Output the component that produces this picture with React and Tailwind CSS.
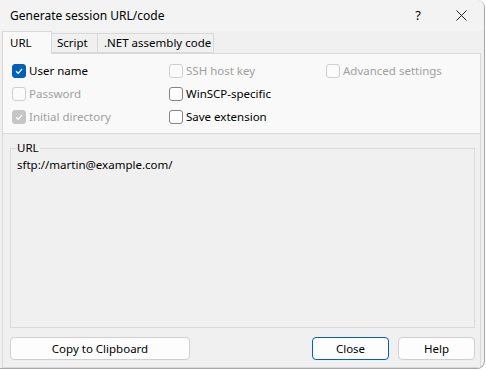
import React from "react";

const font = { fontFamily: '"Segoe UI", "Noto Sans", "Open Sans", sans-serif' };

function Check({ checked, disabled, label }) {
  let box = "border-[#858585] bg-white";
  if (checked && !disabled) box = "border-[#005fb8] bg-[#005fb8]";
  else if (checked && disabled) box = "border-[#c5c5c5] bg-[#c5c5c5]";
  else if (disabled) box = "border-[#cfcfcf] bg-[#fbfbfb]";
  return (
    <div className="flex items-center gap-[3px] h-[23px]">
      <span className={`w-[14px] h-[14px] rounded-[3px] border flex items-center justify-center ${box}`}>
        {checked && (
          <svg width="10" height="10" viewBox="0 0 10 10">
            <path d="M2 5.2 L4.2 7.3 L8 3" fill="none" stroke="white" strokeWidth="1.2" />
          </svg>
        )}
      </span>
      <span className={disabled ? "text-[#a0a0a0]" : "text-black"}>{label}</span>
    </div>
  );
}

function Btn({ children, className = "", primary }) {
  return (
    <button
      className={`h-[23px] rounded-[4px] border bg-[#fdfdfd] text-black text-[11.5px] ${
        primary ? "border-[#005fb8]" : "border-[#d0d0d0]"
      } ${className}`}
    >
      {children}
    </button>
  );
}

export default function App() {
  return (
    <div style={font} className="w-[486px] h-[370px] text-[11.5px] leading-none bg-white whitespace-nowrap">
      <div className="w-[485px] h-[369px] flex flex-col bg-[#f0f0f0] border-r border-b border-[#a8a8a8] rounded-br-[8px] rounded-tr-[8px] overflow-hidden">
        {/* title bar */}
        <div className="h-[31px] bg-[#f3f3f3] flex items-center pl-[10px] shrink-0">
          <span className="flex-1 text-black text-[12px]">Generate session URL/code</span>
          <span className="w-[46px] pl-[6px] text-center text-[13px]">?</span>
          <span className="w-[46px] flex justify-center">
            <svg width="11" height="11" viewBox="0 0 11 11">
              <path d="M0.5 0.5 L10.5 10.5 M10.5 0.5 L0.5 10.5" stroke="#222" strokeWidth="1" />
            </svg>
          </span>
        </div>

        {/* tabs */}
        <div className="flex items-end h-[22px] pl-[2px] shrink-0 relative z-10">
          <div className="h-[23px] w-[50px] bg-[#f9f9f9] border border-b-0 border-[#d9d9d9] flex items-center pl-[7px] -mb-px">
            URL
          </div>
          <div className="h-[20px] w-[46px] bg-[#f0f0f0] border border-l-0 border-[#d9d9d9] flex items-center pl-[5px]">
            Script
          </div>
          <div className="h-[20px] w-[116px] bg-[#f0f0f0] border border-l-0 border-[#d9d9d9] flex items-center pl-[6px]">
            .NET assembly code
          </div>
        </div>

        {/* tab panel */}
        <div className="ml-[2px] mr-[3px] flex-1 bg-[#f9f9f9] border border-[#d9d9d9] flex flex-col">
          <div className="grid grid-cols-[157px_157px_1fr] pl-[9px] pt-[5px] h-[80px] border-b border-[#d9d9d9]">
            <div className="flex flex-col">
              <Check checked label="User name" />
              <Check disabled label="Password" />
              <Check checked disabled label="Initial directory" />
            </div>
            <div className="flex flex-col">
              <Check disabled label="SSH host key" />
              <Check label="WinSCP-specific" />
              <Check label="Save extension" />
            </div>
            <div className="flex flex-col">
              <Check disabled label="Advanced settings" />
            </div>
          </div>

          <div className="flex-1 bg-[#f0f0f0] flex flex-col pl-[7px] pr-[5px] pt-[8px]">
            <div className="relative h-[180px] border border-[#d9d9d9] mt-[6px]">
              <span className="absolute -top-[7px] left-[6px] bg-[#f0f0f0] pr-[1px] text-black">URL</span>
              <div className="pt-[10px] pl-[6px] text-black">sftp://martin@example.com/</div>
            </div>
            <div className="flex items-center mt-[9px]">
              <Btn className="w-[180px]">Copy to Clipboard</Btn>
              <div className="flex-1" />
              <Btn primary className="w-[77px]">Close</Btn>
              <Btn className="w-[77px] ml-[9px]">Help</Btn>
            </div>
          </div>
        </div>
      </div>
    </div>
  );
}
